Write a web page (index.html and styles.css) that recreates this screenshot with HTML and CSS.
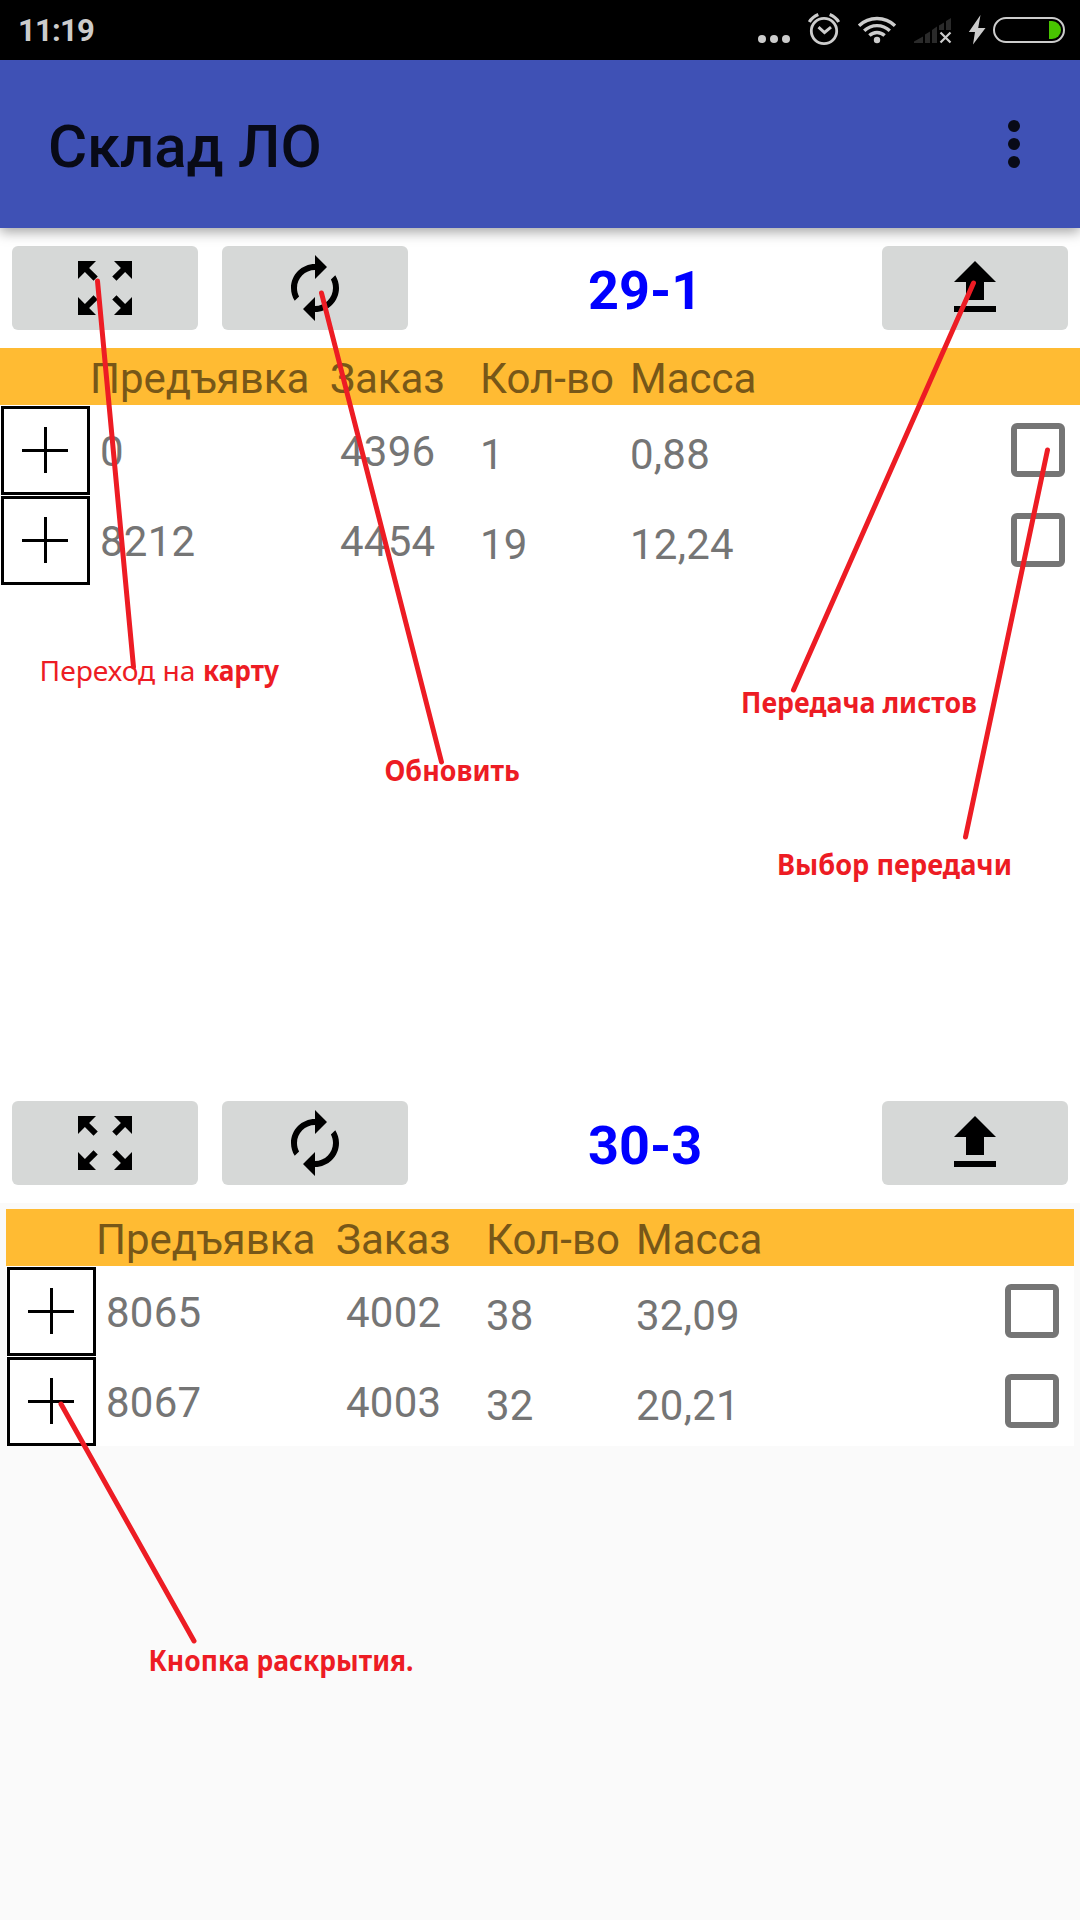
FILE: index.html
```html
<!DOCTYPE html>
<html lang="ru">
<head>
<meta charset="utf-8">
<title>Склад ЛО</title>
<link rel="stylesheet" href="styles.css">
</head>
<body>
<svg class="defs" width="0" height="0" aria-hidden="true">
  <symbol id="expand" viewBox="0 0 24 24"><path d="M15 3l2.3 2.3-2.89 2.87 1.42 1.42L18.7 6.7 21 9V3zM3 9l2.3-2.3 2.87 2.89 1.42-1.42L6.7 5.3 9 3H3zm6 12l-2.3-2.3 2.89-2.87-1.42-1.42L5.3 17.3 3 15v6zm12-6l-2.3 2.3-2.87-2.89-1.42 1.42 2.89 2.87L15 21h6z"/></symbol>
  <symbol id="renew" viewBox="0 0 24 24"><path d="M12 6v3l4-4-4-4v3c-4.42 0-8 3.58-8 8 0 1.57.46 3.03 1.24 4.26L6.7 14.8c-.45-.83-.7-1.79-.7-2.8 0-3.31 2.69-6 6-6zm6.76 1.74L17.3 9.2c.44.84.7 1.79.7 2.8 0 3.31-2.69 6-6 6v-3l-4 4 4 4v-3c4.42 0 8-3.58 8-8 0-1.57-.46-3.03-1.24-4.26z"/></symbol>
  <symbol id="upload" viewBox="0 0 24 24"><path d="M9 16h6v-6h4l-7-7-7 7h4zm-4 2h14v2H5z"/></symbol>
  <symbol id="plus" viewBox="0 0 83 83"><path d="M18 40h46v3H18zM40 18h3v46h-3z"/></symbol>
</svg>

<div class="screen">
  <header class="status">
    <span class="clock">11:19</span>
    <svg class="status-icons" width="330" height="60" viewBox="750 0 330 60">
      <g fill="#ccc"><circle cx="762" cy="39" r="4"/><circle cx="774" cy="39" r="4"/><circle cx="786" cy="39" r="4"/></g>
      <g fill="none" stroke="#ccc" stroke-width="2.8">
        <circle cx="824" cy="31" r="12.7"/>
        <path d="M818.5 27.2l6 5.3 6.500-5.300" stroke-width="3"/>
        <path d="M809.300 22q3-5 9-7.500M838.700 22q-3-5-9-7.500" stroke-width="3.200"/>
      </g>
      <g fill="none" stroke="#ccc" stroke-width="3.400">
        <path d="M859 25.800a26 26 0 0 1 36 0M864.200 30.800a18.500 18.500 0 0 1 25.600 0M869.400 35.500a11 11 0 0 1 15.200 0"/>
      </g>
      <circle cx="877" cy="40" r="3.200" fill="#ccc"/>
      <path fill="#2a2a2a" d="M914 43v-1.500l9-5V43zM925 43v-8.500l5-3V43zM932 43V30l5-3.500V43zM939 30v-4.500l5-3V30zM946 30v-9l5-3v12z"/>
      <path d="M940.500 32.500l10 10M950.500 32.500l-10 10" stroke="#ccc" stroke-width="2.200"/>
      <path fill="#ccc" d="M980.500 15l-11.700 17h6.200l-2 12.500L985.500 28h-7.300z"/>
      <rect x="994" y="18" width="70" height="24" rx="12" fill="none" stroke="#ccc" stroke-width="2"/>
      <path fill="#48c400" d="M1049 21h3a9 9 0 0 1 0 18h-3z"/>
    </svg>
  </header>

  <div class="appbar">
    <h1 class="title">Склад ЛО</h1>
    <div class="overflow"><i></i><i></i><i></i></div>
  </div>

  <section class="panel panel-main">
    <div class="toolbar">
      <button class="btn"><svg class="icon"><use href="#expand"/></svg></button>
      <button class="btn"><svg class="icon"><use href="#renew"/></svg></button>
      <strong class="number">29-1</strong>
      <button class="btn"><svg class="icon"><use href="#upload"/></svg></button>
    </div>
    <div class="table">
      <div class="thead"><span></span><span>Предъявка</span><span>Заказ</span><span>Кол-во</span><span>Масса</span></div>
      <div class="row"><span class="toggle"><svg class="plus"><use href="#plus"/></svg></span><span class="id">0</span><span class="order">4396</span><span class="num">1</span><span class="num">0,88</span><span class="check"></span></div>
      <div class="row"><span class="toggle"><svg class="plus"><use href="#plus"/></svg></span><span class="id">8212</span><span class="order">4454</span><span class="num">19</span><span class="num">12,24</span><span class="check"></span></div>
    </div>
  </section>

  <section class="panel">
    <div class="toolbar">
      <button class="btn"><svg class="icon"><use href="#expand"/></svg></button>
      <button class="btn"><svg class="icon"><use href="#renew"/></svg></button>
      <strong class="number">30-3</strong>
      <button class="btn"><svg class="icon"><use href="#upload"/></svg></button>
    </div>
    <div class="table table-inset">
      <div class="thead"><span></span><span>Предъявка</span><span>Заказ</span><span>Кол-во</span><span>Масса</span></div>
      <div class="row"><span class="toggle"><svg class="plus"><use href="#plus"/></svg></span><span class="id">8065</span><span class="order">4002</span><span class="num">38</span><span class="num">32,09</span><span class="check"></span></div>
      <div class="row"><span class="toggle"><svg class="plus"><use href="#plus"/></svg></span><span class="id">8067</span><span class="order">4003</span><span class="num">32</span><span class="num">20,21</span><span class="check"></span></div>
    </div>
  </section>

  <svg class="notes" width="1080" height="1920" viewBox="0 0 1080 1920">
    <g class="pointers">
      <path d="M97.500 281L133.500 667"/>
      <path d="M321.500 293L441.500 762"/>
      <path d="M973.500 283L793.500 690"/>
      <path d="M1047.500 450L965.500 837"/>
      <path d="M61 1404L194 1641"/>
    </g>
    <g class="labels">
      <text class="light" x="39.500" y="681" textLength="156" lengthAdjust="spacingAndGlyphs">Переход на</text>
      <text x="203" y="681" textLength="76" lengthAdjust="spacingAndGlyphs">карту</text>
      <text x="384.500" y="781" textLength="135.500" lengthAdjust="spacingAndGlyphs">Обновить</text>
      <text x="741" y="713" textLength="236" lengthAdjust="spacingAndGlyphs">Передача листов</text>
      <text x="777" y="875" textLength="235" lengthAdjust="spacingAndGlyphs">Выбор передачи</text>
      <text x="148.500" y="1671" textLength="265" lengthAdjust="spacingAndGlyphs">Кнопка раскрытия.</text>
    </g>
  </svg>
</div>
</body>
</html>
```
FILE: styles.css
```css
* { box-sizing: border-box; }

body {
  margin: 0;
  background: #fafafa;
  font-family: Roboto, "Noto Sans", sans-serif;
}

.defs { display: block; }

.screen {
  position: relative;
  width: 1080px;
  height: 1920px;
  overflow: hidden;
  background: #fafafa;
}

.status {
  display: flex;
  justify-content: space-between;
  height: 60px;
  padding-left: 18px;
  background: #000;
}

.clock {
  color: #ccc;
  font-size: 31px;
  font-weight: 700;
  letter-spacing: -.8px;
  line-height: 61px;
}

.appbar {
  position: relative;
  z-index: 1;
  display: flex;
  align-items: center;
  justify-content: space-between;
  height: 168px;
  padding: 0 60px 0 48px;
  background: #3f51b5;
  box-shadow: 0 4px 12px rgba(0, 0, 0, .36);
}

.title {
  margin: 5px 0 0;
  color: #080a17;
  font-size: 60px;
  font-weight: 500;
  letter-spacing: -.15px;
  line-height: 70px;
}

.overflow {
  display: grid;
  gap: 6px;
}

.overflow i {
  width: 12px;
  height: 12px;
  border-radius: 50%;
  background: #080a17;
}

.panel-main {
  height: 855px;
  background: #fff;
}

.toolbar {
  display: flex;
  gap: 24px;
  height: 120px;
  padding: 18px 12px;
  background: #fff;
}

.btn {
  display: flex;
  align-items: center;
  justify-content: center;
  width: 186px;
  height: 84px;
  padding: 0;
  border: 0;
  border-radius: 6px;
  background: #d6d8d7;
}

.icon {
  width: 72px;
  height: 72px;
}

.number {
  flex: 1;
  padding-left: 156px;
  color: #00f;
  font-size: 54px;
  font-weight: 700;
  line-height: 90px;
}

.table {
  background: #fff;
  color: #757575;
  font-size: 42px;
}

.table-inset { margin: 6px 6px 0; }

.thead,
.row {
  display: grid;
  grid-template-columns: 90px 240px 150px 150px 1fr auto;
}

.thead {
  height: 57px;
  background: #ffbb33;
  color: #775718;
  line-height: 61px;
}

.row {
  height: 90px;
  letter-spacing: .25px;
  line-height: 94px;
}

.toggle {
  width: 89px;
  height: 89px;
  margin: 1px 0 0 1px;
  border: 3px solid #000;
  background: #fff;
}

.plus {
  display: block;
  width: 83px;
  height: 83px;
}

.id,
.order { padding-left: 10px; }

.num { padding-top: 3px; }

.check {
  width: 54px;
  height: 54px;
  margin: 18px 15px 0 0;
  border: 6px solid #757575;
  border-radius: 6px;
}

/* callouts drawn over the screen */
.notes {
  position: absolute;
  z-index: 2;
  top: 0;
  left: 0;
}

.pointers {
  fill: none;
  stroke: #ed1c24;
  stroke-width: 5;
  stroke-linecap: round;
}

.labels {
  fill: #ed1c24;
  font-family: "Noto Sans", "Open Sans", sans-serif;
  font-size: 28px;
  font-weight: 700;
}

.labels .light { font-weight: 400; }
```
